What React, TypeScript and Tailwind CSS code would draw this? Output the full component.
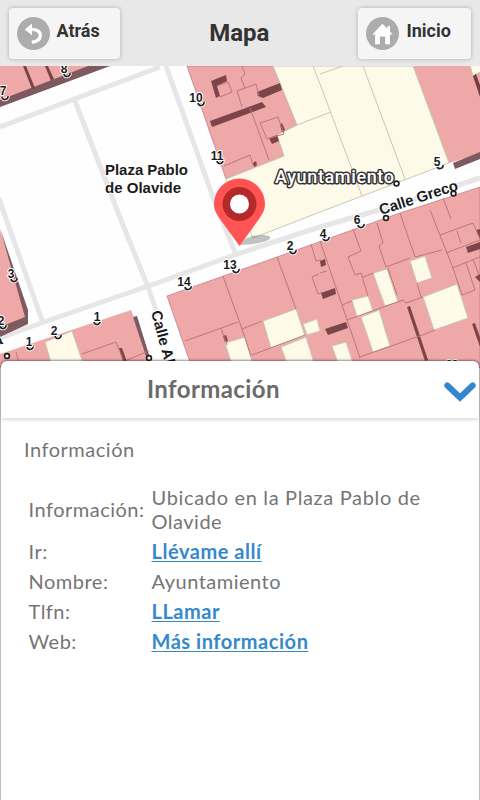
import React from "react";

const LINE = "#c0747c";

const houseNumbers: [string, number, number, number, number][] = [
  ["7", 3, 95, 5, 98],
  ["8", 64, 73, 67, 75],
  ["10", 196, 102, 201, 104],
  ["11", 217, 160, 220, 162],
  ["3", 11, 278, 14, 280],
  ["2", 1, 325, 3, 327],
  ["1", 29, 346, 30, 348],
  ["2", 54, 335, 58, 337],
  ["1", 97, 321, 97, 323],
  ["14", 184, 286, 188, 288],
  ["13", 230, 269, 236, 271],
  ["2", 290, 250, 293, 252],
  ["4", 323, 238, 326, 239],
  ["6", 357, 224, 361, 226],
  ["5", 437, 166, 440, 167],
];

function CityMap() {
  return (
    <svg viewBox="0 66 480 302" className="block h-[302px] w-full shrink-0" aria-label="Mapa">
      <rect y="66" width="480" height="302" fill="#fefefe" />
      <g fill="none" stroke="#e6e6e6" strokeWidth="5">
        <path d="M0 127L160 67M75 101L117 210L148 287L158 316M-1 198L4 213L43 323M0 338L44 322L160 282L237 254L320 227L400 204L480 178M166 66L213 197L236 255" />
      </g>
      <g fill="#eea8a8">
        <path d="M0 66H109L0 107Z" />
        <path d="M0 230L27 310V324L0 336Z" />
        <path d="M0 354L131 310L153 368H0Z" />
        <path d="M187 66H273L297 125L277 135L284 156L226 179Z" stroke={LINE} strokeWidth=".7" />
        <path d="M413 66H480V154L449 163Z" />
        <path d="M167 296L277 257L397 214L480 187V368H192Z" stroke={LINE} strokeWidth=".7" />
      </g>
      <g fill="#fefaea" stroke="#c8c7b3" strokeWidth="1">
        <path d="M273 66H413L449 163L320 212L253 238L226 179L284 156L277 135L297 125Z" />
        <path d="M45 342L72 331L84 366H52Z" />
        <path d="M470 65H482V71L473 76Z" />
        <path d="M263 321L296 309L305 336L271 348ZM303 324L317 319L320 331L307 335ZM281 347L306 337L315 366H288ZM225 343L245 337L253 365H232Z" />
        <path d="M373 273L387 269L398 302L385 306ZM410 261L425 256L432 278L417 283ZM423 297L457 284L468 318L434 330ZM352 300L368 296L373 311L357 317ZM361 317L379 310L390 346L373 352ZM332 346L346 342L354 366H339Z" />
        <path d="M320 84L362 196M363 66L405 179M297 125L331 112M313 66L320 84M320 74L343 66" fill="none" />
      </g>
      <g fill="#7d5a60">
        <path d="M0 100L88 66H110L0 107Z" />
        <path d="M26 66L35 88L32 89L23 66ZM48 66L54 79L51 81L45 66Z" fill="#794448" />
        <path d="M0 228L28 310V324L0 337V327L25 317Z" />
        <path d="M133 317L137 316L150 358L147 359ZM453 163L480 152V159L455 169Z" />
        <path d="M473 76L476 74L481 88V100Z" fill="#703d42" />
      </g>
      <g fill="#7b4549">
        <path d="M211 81L226 75L227 81L217 86L220 96L216 98Z" />
        <path d="M210 121L262 102L266 107L212 127ZM257 92L280 83L282 90L263 98L258 96Z" />
        <path d="M269 138L277 135L279 141L272 144ZM280 125L282 123L285 130L282 132ZM253 163L256 161L257 165L254 167Z" />
        <path d="M320 261L325 259L326 265L321 267ZM321 293L335 288L336 294L323 299ZM325 329L346 322L348 328L328 335ZM223 336L226 335L228 341L225 342Z" />
        <path d="M407 307L410 306L428 360L425 361ZM466 247L480 242V249L468 253ZM476 230L480 229V239ZM475 277L480 274V282ZM472 324L475 323L481 340V350ZM119 348L122 348L127 362H123Z" />
      </g>
      <g fill="none" stroke={LINE} strokeWidth="1">
        <path d="M217 86L228 82L232 92L220 97M242 66L245 74L241 78L245 88M237 91L256 84L259 95M237 91L242 107M250 108L269 160M260 123L278 117L284 134L267 139ZM224 166L250 155L253 165" />
        <path d="M223 276L242 329L251 356M185 341L238 322M221 328L227 345M242 329L262 321M277 257L296 309M252 355L305 335M311 244L316 261L321 260M312 277L319 274M312 277L318 294L322 292" />
        <path d="M320 241L342 305L360 358M320 273L327 271M353 229L361 251L348 257L355 275L361 273L368 296M377 223L383 243L379 246L386 267L410 258M363 277L374 273" />
        <path d="M400 213L415 257L442 250M430 210L453 268L462 295L475 290L466 263M388 268L397 295M417 283L421 297M342 305L352 301M347 320L403 300L406 303L423 297M360 357L425 334L435 330" />
        <path d="M440 235L473 223L480 239M457 231L461 243M446 253L480 240M452 268L480 257M473 259L479 275M443 198L451 219M16 352L20 366M82 354L116 342L124 362M127 360L149 351" />
      </g>

      <g fontFamily="Liberation Sans, Arial, sans-serif" fontWeight="700" fill="#1b1b1b" stroke="#fff" strokeWidth="2" strokeLinejoin="round" paintOrder="stroke">
        {houseNumbers.map(([label, x, y, cx, cy], i) => (
          <g key={i}>
            <path d={`M${cx - 3} ${cy - 1}A3 3 0 1 0 ${cx + 3} ${cy - 2}`} fill="none" stroke="#fff" strokeWidth="3.5" />
            <path d={`M${cx - 3} ${cy - 1}A3 3 0 1 0 ${cx + 3} ${cy - 2}`} fill="none" stroke="#222" strokeWidth="1.7" />
            <text x={x} y={y} fontSize="12" textAnchor="middle">{label}</text>
          </g>
        ))}
        <text x="105" y="175" fontSize="15" textLength="83" lengthAdjust="spacingAndGlyphs">Plaza Pablo</text>
        <text x="105" y="193" fontSize="15" textLength="76" lengthAdjust="spacingAndGlyphs">de Olavide</text>
        <text transform="translate(381 215) rotate(-18)" fontSize="15" textLength="82">Calle Greco</text>
        <text transform="translate(151 312) rotate(75)" fontSize="15">Calle Alta</text>
        <text transform="translate(-4 346) rotate(-18)" fontSize="14">a</text>
        <text x="446" y="368" fontSize="11">22</text>
      </g>
      <g fill="#fff" stroke="#222" strokeWidth="1.7">
        <circle cx="396.5" cy="183.5" r="2.4" />
        <circle cx="386" cy="218" r="2.4" />
        <circle cx="453.5" cy="193.5" r="2.4" />
        <circle cx="7" cy="356" r="2.4" />
        <circle cx="149" cy="358" r="2.4" />
      </g>
      <text x="275" y="183" fontFamily="Roboto, sans-serif" fontSize="18" fontWeight="500" textLength="119" fill="#fff" stroke="#333" strokeWidth="3" strokeLinejoin="round" paintOrder="stroke">Ayuntamiento</text>

      <path d="M240 245C244 236 261 233 269 236C274 240 262 244 240 245Z" fill="#777" opacity=".45" />
      <path d="M239.5 246L220 219C215 212 214 208 214 204A25.5 25.5 0 0 1 265 204C265 208 264 212 259 219Z" fill="#ff5453" />
      <circle cx="239.5" cy="204" r="17" fill="#b3292c" />
      <circle cx="239.5" cy="204" r="9.5" fill="#fff" />
    </svg>
  );
}

function HeaderButton({ label, children }: { label: string; children: React.ReactNode }) {
  return (
    <button className="flex h-[51px] w-full items-center rounded-[4px] bg-[#f5f5f5] pl-2 text-[18px] font-bold text-[#333] shadow-[0_0_4px_rgba(0,0,0,0.25)]">
      <svg viewBox="0 0 33 33" className="h-[33px] w-[33px] shrink-0" aria-hidden="true">
        <circle cx="16.5" cy="16.5" r="16.5" fill="#acacac" />
        {children}
      </svg>
      <span className="mb-1 ml-[7px] leading-6">{label}</span>
    </button>
  );
}

const link = "font-bold text-[#3688cc] underline decoration-1 underline-offset-2 tracking-[0.54px]";

function Row({ label, top, children }: { label: string; top?: boolean; children: React.ReactNode }) {
  return (
    <div className={top ? "flex h-[54px] items-center leading-6" : "flex h-[30px] items-center leading-6"}>
      <div className="w-[123px] shrink-0">{label}</div>
      <div className="whitespace-nowrap">{children}</div>
    </div>
  );
}

export default function App() {
  return (
    <div className="flex h-[800px] w-[480px] flex-col overflow-hidden bg-white">
      <header className="flex h-[66px] shrink-0 items-center justify-between bg-[#e8e8e8] px-[8.5px] font-['Roboto',sans-serif]">
        <div className="w-[111.5px]">
          <HeaderButton label="Atrás">
            <path d="M7.7 12.4L15 6.5V18.2Z" fill="#fff" />
            <path d="M14 12.3C19.5 12.1 23.3 14.4 23.3 18.2C23.3 22.2 19.5 24.6 14.8 25.3" fill="none" stroke="#fff" strokeWidth="3.3" />
          </HeaderButton>
        </div>
        <h1 className="text-2xl font-bold text-[#333]">Mapa</h1>
        <div className="w-[113px]">
          <HeaderButton label="Inicio">
            <path d="M6.3 17.4L16.5 6.8L21.3 11.7V9.2H24V14.6L26.8 17.4H24V27.3H19.2V19.6H13.9V27.3H9.1V17.4Z" fill="#fff" />
          </HeaderButton>
        </div>
      </header>
      <CityMap />
      <section className="z-10 mx-px -mt-[7px] flex flex-1 flex-col rounded-t-[6px] bg-white font-['Lato',sans-serif] text-[20px] text-[#757575] shadow-[0_0_2px_1px_rgba(0,0,0,0.35)]">
        <div className="flex h-[57px] shrink-0 items-center rounded-t-[6px] shadow-[0_1px_5px_rgba(0,0,0,0.2)]">
          <h2 className="mb-0.5 ml-[146px] w-[138px] whitespace-nowrap text-2xl font-bold tracking-[0.4px] text-[#6b6b6b]">Información</h2>
          <svg viewBox="0 0 32 20" className="ml-[159px] mt-1 h-5 w-8" fill="none" stroke="#3286d0" strokeWidth="6" strokeLinecap="round" strokeLinejoin="miter" aria-hidden="true">
            <path d="M3.3 3.5L16 15.5L28.7 3.5" />
          </svg>
        </div>
        <p className="ml-[23px] mt-[19px] leading-6 tracking-[0.52px]">Información</p>
        <div className="ml-[27.5px] mt-[21px] tracking-[0.5px]">
          <Row label="Información:" top><span className="tracking-[0.66px]">Ubicado en la Plaza Pablo de</span><br />Olavide</Row>
          <Row label="Ir:"><a href="#ir" className={link}>Llévame allí</a></Row>
          <Row label="Nombre:">Ayuntamiento</Row>
          <Row label="Tlfn:"><a href="#llamar" className={link}>LLamar</a></Row>
          <Row label="Web:"><a href="#web" className={link}>Más información</a></Row>
        </div>
      </section>
    </div>
  );
}
